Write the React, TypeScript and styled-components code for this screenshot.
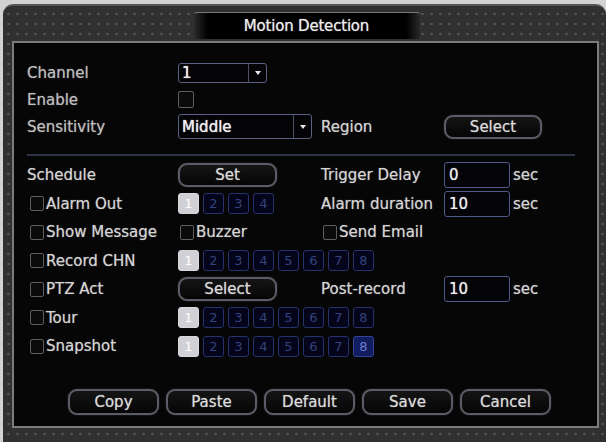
import React from "react";
import styled, { createGlobalStyle } from "styled-components";

const GlobalStyle = createGlobalStyle`
  body {
    margin: 0;
    background: #d2d2d2;
    font-family: "DejaVu Sans", "Liberation Sans", sans-serif;
  }
`;

const Frame = styled.div`
  margin: 4px 0 0 3px;
  width: 603px;
  height: 438px;
  box-sizing: border-box;
  background-color: #303030;
  background-image: radial-gradient(ellipse 2px 1.6px, #626262 0, #4a4a4a 60%, transparent 100%);
  background-size: 9px 10px;
  background-position: 1px 3px;
  border-radius: 10px 10px 0 0;
  border-top: 2px solid #555;
  overflow: hidden;
`;

const TitleBar = styled.div`
  height: 35px;
  padding-top: 3px;
  box-sizing: border-box;
  display: flex;
  justify-content: center;
  align-items: center;
`;

const TitleTab = styled.div`
  width: 226px;
  height: 26px;
  margin-left: 4px;
  display: flex;
  align-items: center;
  justify-content: center;
  border-radius: 3px;
  border-top: 1px solid #7a7a7a;
  background: linear-gradient(90deg, #2a2a2a 0%, #000 6%, #000 94%, #2a2a2a 100%);
  color: #ececec;
  font-size: 15px;
  letter-spacing: -0.2px;
  text-shadow: 0 0 1px #aaa;
`;

const Panel = styled.div`
  margin-left: 9px;
  width: 587px;
  height: 387px;
  box-sizing: border-box;
  border: 2px solid #7c7c7c;
  background: #060606;
  padding: 16px 0 0 13px;
`;

const FormGrid = styled.div<{ $rowH: number }>`
  display: grid;
  grid-template-columns: 151px 143px 123px 69px 1fr;
  grid-auto-rows: ${(p) => p.$rowH}px;
  align-items: center;
`;

const Divider = styled.div`
  height: 2px;
  margin: 14px 22px 5px 0;
  background: #2e3546;
`;

const Label = styled.span<{ $dim?: boolean }>`
  font-size: 15px;
  color: ${(p) => (p.$dim ? "#bdbdbd" : "#d4d4d4")};
  text-shadow: 0 0 1px #888;
  white-space: nowrap;
`;

const CheckLabel = styled.label<{ $inset?: number }>`
  display: flex;
  align-items: center;
  gap: 2px;
  margin-left: ${(p) => p.$inset ?? 3}px;
  font-size: 15px;
  color: #d4d4d4;
  text-shadow: 0 0 1px #888;
  white-space: nowrap;
`;

const Box = styled.span<{ $size?: number }>`
  display: inline-block;
  width: ${(p) => p.$size ?? 14}px;
  height: ${(p) => (p.$size ?? 14) + 1}px;
  box-sizing: border-box;
  border: 1px solid #5e5e5e;
  border-radius: 2px;
  background: #0b0b0b;
`;

const SelectBox = styled.div<{ $w: number; $h: number }>`
  width: ${(p) => p.$w}px;
  height: ${(p) => p.$h}px;
  box-sizing: border-box;
  display: flex;
  border: 1.5px solid #5a6080;
  border-radius: 3px;
  background: #040406;
`;

const SelectValue = styled.span`
  flex: 1;
  display: flex;
  align-items: center;
  padding-left: 3px;
  font-size: 15px;
  color: #ededed;
  text-shadow: 0 0 1px #fff;
`;

const SelectArrow = styled.span`
  width: 17px;
  display: flex;
  align-items: center;
  justify-content: center;
  border-left: 1.5px solid #4a4f68;
  &::after {
    content: "";
    border-left: 3px solid transparent;
    border-right: 3px solid transparent;
    border-top: 4px solid #e8e8e8;
  }
`;

const TextBox = styled.div`
  width: 66px;
  height: 26px;
  box-sizing: border-box;
  display: flex;
  align-items: center;
  padding-left: 4px;
  border: 1.5px solid #4f5a8a;
  border-radius: 3px;
  background: #040408;
  font-size: 15px;
  color: #f0f0f0;
  text-shadow: 0 0 1px #aaa;
`;

const Button = styled.button<{ $w: number; $h: number }>`
  width: ${(p) => p.$w}px;
  height: ${(p) => p.$h}px;
  padding: 0;
  border: 2px solid #5c5c68;
  border-radius: 9px;
  background: linear-gradient(#151515, #050505);
  box-shadow: 0 0 1px #888;
  font-family: inherit;
  font-size: 15px;
  color: #dadada;
  text-shadow: 0 0 1px #999;
`;

const ChannelRow = styled.div<{ $span: number }>`
  grid-column: 2 / span ${(p) => p.$span};
  display: flex;
  gap: 4px;
`;

const NumBox = styled.span<{ $state?: "on" | "focus" }>`
  width: 21px;
  height: 21px;
  box-sizing: border-box;
  display: flex;
  align-items: center;
  justify-content: center;
  border: 1.5px solid
    ${(p) => (p.$state === "on" ? "#d8d8dc" : p.$state === "focus" ? "#34449a" : "#26326a")};
  border-radius: 3px;
  background: ${(p) => (p.$state === "on" ? "#d0d0d6" : p.$state === "focus" ? "#121d60" : "#04051a")};
  color: ${(p) => (p.$state === "on" ? "#ffffff" : p.$state === "focus" ? "#6c7ccc" : "#34427a")};
  font-size: 13px;
`;

const ButtonBar = styled.div`
  display: flex;
  gap: 7px;
  margin-top: 28px;
  padding-left: 41px;
`;

const Channels: React.FC<{ count: number; focus?: number }> = ({ count, focus }) => (
  <ChannelRow $span={count > 4 ? 2 : 1}>
    {Array.from({ length: count }, (_, i) => (
      <NumBox key={i} $state={i === 0 ? "on" : i + 1 === focus ? "focus" : undefined}>
        {i + 1}
      </NumBox>
    ))}
  </ChannelRow>
);

const Check: React.FC<{ label: string; inset?: number }> = ({ label, inset }) => (
  <CheckLabel $inset={inset}>
    <Box />
    {label}
  </CheckLabel>
);

export default function App() {
  return (
    <>
      <GlobalStyle />
      <Frame>
        <TitleBar>
          <TitleTab>Motion Detection</TitleTab>
        </TitleBar>
        <Panel>
          <FormGrid $rowH={27}>
            <Label $dim>Channel</Label>
            <SelectBox $w={89} $h={20}>
              <SelectValue>1</SelectValue>
              <SelectArrow />
            </SelectBox>
            <span />
            <span />
            <span />

            <Label $dim>Enable</Label>
            <Box $size={16} />
            <span />
            <span />
            <span />

            <Label $dim>Sensitivity</Label>
            <SelectBox $w={134} $h={25}>
              <SelectValue>Middle</SelectValue>
              <SelectArrow />
            </SelectBox>
            <Label>Region</Label>
            <Button $w={98} $h={24}>Select</Button>
          </FormGrid>

          <Divider />

          <FormGrid $rowH={28.5}>
            <Label>Schedule</Label>
            <Button $w={99} $h={24}>Set</Button>
            <Label>Trigger Delay</Label>
            <TextBox>0</TextBox>
            <Label>sec</Label>

            <Check label="Alarm Out" />
            <Channels count={4} />
            <Label>Alarm duration</Label>
            <TextBox>10</TextBox>
            <Label>sec</Label>

            <Check label="Show Message" />
            <Check label="Buzzer" inset={2} />
            <Check label="Send Email" inset={2} />
            <span />
            <span />

            <Check label="Record CHN" />
            <Channels count={8} />
            <span />
            <span />

            <Check label="PTZ Act" />
            <Button $w={99} $h={24}>Select</Button>
            <Label>Post-record</Label>
            <TextBox>10</TextBox>
            <Label>sec</Label>

            <Check label="Tour" />
            <Channels count={8} />
            <span />
            <span />

            <Check label="Snapshot" />
            <Channels count={8} focus={8} />
            <span />
            <span />
          </FormGrid>

          <ButtonBar>
            {["Copy", "Paste", "Default", "Save", "Cancel"].map((b) => (
              <Button key={b} $w={91} $h={26}>
                {b}
              </Button>
            ))}
          </ButtonBar>
        </Panel>
      </Frame>
    </>
  );
}
